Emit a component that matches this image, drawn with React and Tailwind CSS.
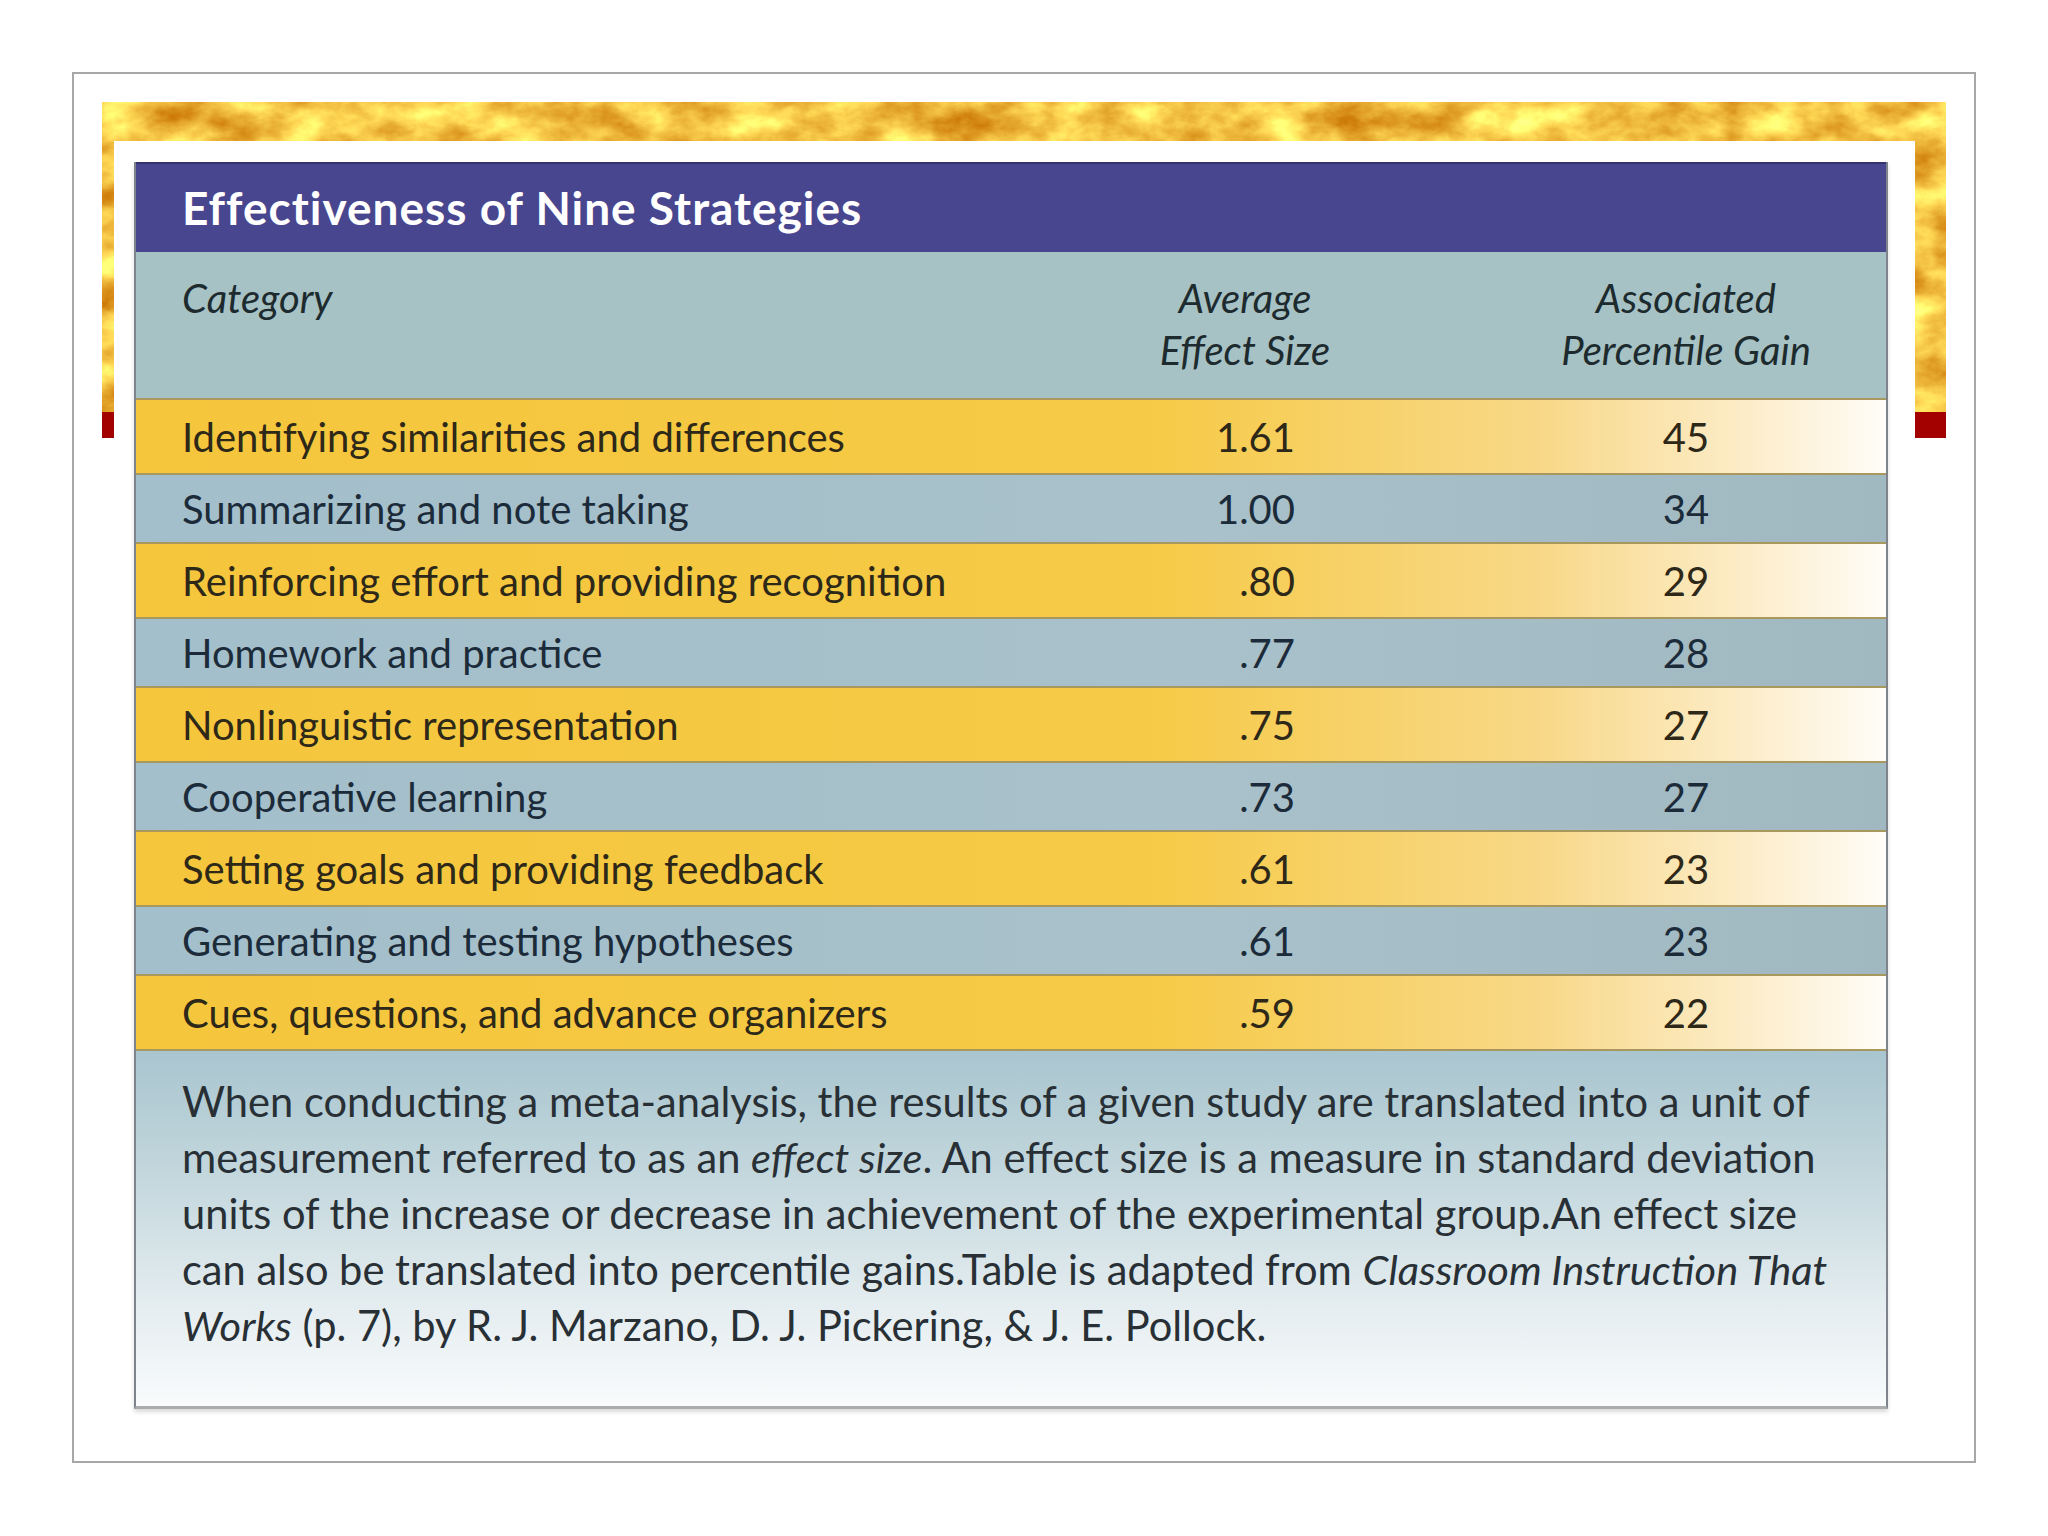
import React from 'react'

const rows = [
    ['Identifying similarities and differences', '1.61', '45'],
    ['Summarizing and note taking', '1.00', '34'],
    ['Reinforcing effort and providing recognition', '.80', '29'],
    ['Homework and practice', '.77', '28'],
    ['Nonlinguistic representation', '.75', '27'],
    ['Cooperative learning', '.73', '27'],
    ['Setting goals and providing feedback', '.61', '23'],
    ['Generating and testing hypotheses', '.61', '23'],
    ['Cues, questions, and advance organizers', '.59', '22'],
]

function GoldBand() {
    return (
        <div className="col-start-1 row-start-1 self-start flex flex-col">
            <svg className="block w-full h-[310px]" preserveAspectRatio="none">
                <filter id="gold" x="0" y="0" width="100%" height="100%" colorInterpolationFilters="sRGB">
                    <feTurbulence type="fractalNoise" baseFrequency="0.018 0.028" numOctaves="5" seed="11" />
                    <feColorMatrix type="matrix" values="0.45 0 0 0 0.73  0.85 0 0 0 0.34  0.7 0 0 0 -0.08  0 0 0 0 1" />
                </filter>
                <rect width="100%" height="100%" filter="url(#gold)" />
            </svg>
            <div className="h-[26px] bg-[#a30000]"></div>
        </div>
    )
}

function StrategyTable() {
    return (
        <div className="border-x-2 border-x-[#7f838c] border-b-[3px] border-b-[#a9abae] shadow-[0_3px_4px_rgba(0,0,0,0.15)]">
            <div className="h-[90px] flex items-center pl-[46px] bg-[#48468f] border-t-2 border-[#34336b]">
                <h1 className="text-white font-bold text-[46px] tracking-[1px] leading-none">Effectiveness of Nine Strategies</h1>
            </div>

            <div className="grid grid-cols-[878px_472px_1fr] h-[146px] bg-[#a6c2c5] pt-[20px] italic text-[40px] leading-[52px] text-[#1d2a2e]">
                <div className="pl-[46px]">Category</div>
                <div className="text-center pr-[10px]">Average<br />Effect Size</div>
                <div className="text-center">Associated<br />Percentile Gain</div>
            </div>

            {rows.map((row, index) => (
                <div
                    key={index}
                    className={
                        index % 2 === 0
                            ? 'grid grid-cols-[878px_472px_1fr] items-center h-[75px] border-t-2 border-[#a8985e] text-[#2d2818] bg-[linear-gradient(to_right,#f5c63c_0%,#f6ca46_58%,#f8d887_80%,#fcecc8_92%,#fffdf8_100%)]'
                            : 'grid grid-cols-[878px_472px_1fr] items-center h-[69px] border-t-2 border-[#a8985e] text-[#1c2b3a] bg-[linear-gradient(to_right,#a3bfcb_0%,#a8c1ca_60%,#a0b9c1_100%)]'
                    }
                >
                    <div className="pl-[46px] text-[40px] leading-none whitespace-nowrap">{row[0]}</div>
                    <div className="text-right pr-[191px] text-[40px] leading-none">{row[1]}</div>
                    <div className="text-center text-[40px] leading-none">{row[2]}</div>
                </div>
            ))}

            <div className="h-[357px] border-t-2 border-[#a8985e] pl-[46px] pt-[22px] text-[41.6px] leading-[56px] text-[#283036] bg-[linear-gradient(to_bottom,#a9c5cf_0%,#c3d7dd_35%,#e3ecef_70%,#f9fbfc_100%)] whitespace-nowrap">
                When conducting a meta-analysis, the results of a given study are translated into a unit of<br />
                measurement referred to as an <i>effect size</i>. An effect size is a measure in standard deviation<br />
                units of the increase or decrease in achievement of the experimental group.An effect size<br />
                can also be translated into percentile gains.Table is adapted from <i>Classroom Instruction That</i><br />
                <i>Works</i> (p. 7), by R. J. Marzano, D. J. Pickering, &amp; J. E. Pollock.
            </div>
        </div>
    )
}

export default function App() {
    return (
        <div className="w-[2048px] h-[1536px] bg-white pt-[72px] pl-[72px] font-['Lato',sans-serif]">
            <div className="w-[1904px] h-[1391px] border-2 border-[#a7a7a7] p-[28px]">
                <div className="grid">
                    <GoldBand />
                    <div className="col-start-1 row-start-1 mt-[39px] ml-[12px] mr-[31px] bg-white pl-[20px] pr-[27px] pt-[21px]">
                        <StrategyTable />
                    </div>
                </div>
            </div>
        </div>
    )
}
